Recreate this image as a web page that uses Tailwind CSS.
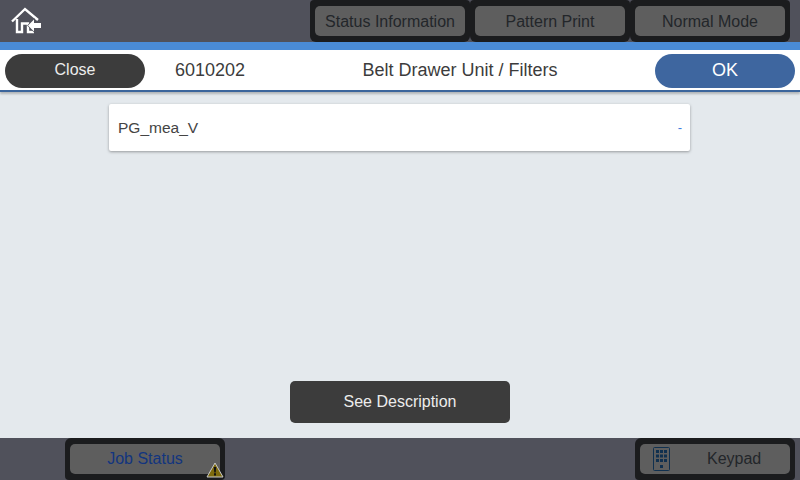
<!DOCTYPE html>
<html lang="en">
<head>
  <meta charset="UTF-8" />
  <title>Belt Drawer Unit / Filters</title>
  <script src="https://cdn.jsdelivr.net/npm/@tailwindcss/browser@4"></script>
</head>
<body class="w-[800px] h-[480px] overflow-hidden bg-[#e4e9ed] font-['Liberation_Sans',sans-serif] text-[16px]">
  <div class="flex flex-col h-[480px]">

    <!-- Top bar -->
    <header class="h-[42px] bg-[#50515b] flex items-center shrink-0">
      <svg class="ml-[10px] w-[33px] h-[28px]" viewBox="0 0 33 28" fill="none">
        <path d="M2 14.5 L15 2 L28 13" stroke="#fff" stroke-width="2.4" />
        <path d="M7 12 V25 H12 V16.5 H18 V25 H24" stroke="#fff" stroke-width="2.4" />
        <path d="M18 18.5 L24 12.5 V16 H31 V21 H24 V24.5 Z" fill="#fff" stroke="#50515b" stroke-width="1.2" paint-order="stroke" />
      </svg>
      <div class="ml-auto flex mr-[10px]">
        <div class="w-[160px] h-[42px] bg-[#1b1c1e] rounded-b-[6px] rounded-t-[4px] px-[5px] py-[6px]">
          <div class="h-[30px] pt-[1px] bg-[#5e5e5e] rounded-[5px] flex items-center justify-center text-[#23262a]">Status Information</div>
        </div>
        <div class="w-[160px] h-[42px] bg-[#1b1c1e] rounded-b-[6px] rounded-t-[4px] px-[5px] py-[6px]">
          <div class="h-[30px] pt-[1px] bg-[#5e5e5e] rounded-[5px] flex items-center justify-center text-[#23262a]">Pattern Print</div>
        </div>
        <div class="w-[160px] h-[42px] bg-[#1b1c1e] rounded-b-[6px] rounded-t-[4px] px-[5px] py-[6px]">
          <div class="h-[30px] pt-[1px] bg-[#5e5e5e] rounded-[5px] flex items-center justify-center text-[#23262a]">Normal Mode</div>
        </div>
      </div>
    </header>

    <!-- Title bar -->
    <div class="h-[8px] bg-[#4a8bd6] shrink-0"></div>
    <div class="h-[42px] bg-white border-b-2 border-[#3b659c] shadow-[0_2px_2px_rgba(0,0,0,0.22)] flex items-center relative shrink-0 px-[5px] pt-[2px]">
      <div class="w-[140px] h-[34px] pb-[2px] rounded-full bg-[#3c3c3c] text-[#ececec] flex items-center justify-center">Close</div>
      <div class="ml-[30px] pb-[2px] text-[#3c3c3c] text-[18px]">6010202</div>
      <div class="flex-1 pb-[2px] text-center text-[#3c3c3c] text-[18px] pl-[20px]">Belt Drawer Unit / Filters</div>
      <div class="w-[140px] h-[34px] pb-[2px] rounded-full bg-[#3e669f] text-white text-[18px] flex items-center justify-center">OK</div>
    </div>

    <!-- Content -->
    <main class="flex-1 flex flex-col items-center">
      <div class="mt-[12px] w-[581px] h-[47px] -ml-[1px] bg-white rounded-[2px] shadow-[0_1px_3px_rgba(0,0,0,0.35)] flex items-center justify-between pl-[9px] pr-[8px]">
        <span class="text-[#444444] text-[15.5px]">PG_mea_V</span>
        <span class="text-[#3f7fe0] text-[13px]">-</span>
      </div>
      <div class="mt-auto mb-[15px] w-[220px] h-[42px] bg-[#3c3c3c] rounded-[5px] text-[#ececec] flex items-center justify-center">See Description</div>
    </main>

    <!-- Bottom bar -->
    <footer class="h-[42px] bg-[#50515b] flex items-center justify-between shrink-0">
      <div class="ml-[65px] w-[160px] h-[42px] bg-[#1b1c1e] rounded-t-[6px] rounded-b-[4px] px-[5px] py-[6px] relative">
        <div class="h-[30px] bg-[#5e5e5e] rounded-[5px] flex items-center justify-center text-[#12357f]">Job Status</div>
        <svg class="absolute right-[1px] bottom-[2px] w-[18px] h-[16px]" viewBox="0 0 18 16">
          <path d="M9 1 L17 15 H1 Z" fill="#7d6a0c" stroke="#c8c8c8" stroke-width="1" stroke-linejoin="round" />
          <path d="M7.8 5 H10.2 L9.7 10.5 H8.3 Z M8 11.3 H10 V13.4 H8 Z" fill="#111" />
        </svg>
      </div>
      <div class="mr-[5px] w-[160px] h-[42px] bg-[#1b1c1e] rounded-t-[6px] rounded-b-[4px] px-[5px] py-[6px]">
        <div class="h-[30px] bg-[#5e5e5e] rounded-[5px] flex items-center text-[#23262a]">
          <svg class="ml-[13px] w-[17px] h-[24px]" viewBox="0 0 17 24" fill="#10304f">
            <rect x="0.5" y="0.5" width="16" height="23" rx="1" fill="none" stroke="#10304f" />
            <rect x="3" y="3" width="3" height="3" /><rect x="7" y="3" width="3" height="3" /><rect x="11" y="3" width="3" height="3" />
            <rect x="3" y="7.5" width="3" height="3" /><rect x="7" y="7.5" width="3" height="3" /><rect x="11" y="7.5" width="3" height="3" />
            <rect x="3" y="12" width="3" height="3" /><rect x="7" y="12" width="3" height="3" /><rect x="11" y="12" width="3" height="3" />
            <rect x="7" y="18" width="3" height="3" />
          </svg>
          <span class="ml-[37px]">Keypad</span>
        </div>
      </div>
    </footer>
  </div>
</body>
</html>
